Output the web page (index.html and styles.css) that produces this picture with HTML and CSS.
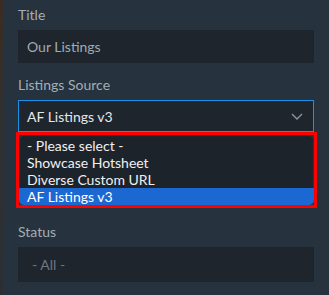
FILE: index.html
```html
<!DOCTYPE html>
<html lang="en">
<head>
    <meta charset="UTF-8">
    <title>Listings widget settings</title>
    <link rel="stylesheet" href="styles.css">
</head>
<body>
    <div class="edge"></div>
    <div class="panel">
        <div class="field">
            <label class="field-label">Title</label>
            <div class="input">Our Listings</div>
        </div>

        <div class="field field-open">
            <label class="field-label">Listings Source</label>
            <div class="select">
                <span>AF Listings v3</span>
                <svg class="chevron" width="12" height="7" viewBox="0 0 12 7">
                    <path d="M1 1 L6 6 L11 1" fill="none" stroke="#8b959d" stroke-width="1.4"/>
                </svg>
            </div>
            <!-- open native dropdown, outlined -->
            <div class="dropdown">
                <ul class="options">
                    <li>- Please select -</li>
                    <li>Showcase Hotsheet</li>
                    <li>Diverse Custom URL</li>
                    <li class="selected">AF Listings v3</li>
                </ul>
            </div>
        </div>

        <div class="field">
            <label class="field-label">Status</label>
            <div class="input input-status placeholder">- All -</div>
        </div>
    </div>
</body>
</html>
```

FILE: styles.css
```css
body {
    margin: 0;
    padding: 0;
    background-color: #26323d;
    font-family: Lato, "Noto Sans", sans-serif;
    display: flex;
    min-height: 295px;
}
.edge {
    width: 3px;
    background: linear-gradient(#3b2c22, #30302f 40%, #2b2f34);
}
.panel {
    flex: 1;
    padding: 6px 15px 0 15px;
}
.field {
    margin-bottom: 13px;
}
.field-open {
    position: relative;
    margin-bottom: 91px;
}
.field-label {
    display: block;
    font-size: 14px;
    line-height: 18px;
    color: #a4aeb6;
    margin-bottom: 6px;
}
.input {
    height: 33px;
    background-color: #1e252d;
    color: #a1abb3;
    font-size: 14px;
    line-height: 33px;
    padding: 0 9px;
}
.input-status {
    height: 35px;
    line-height: 35px;
    padding: 0 14px;
}
.placeholder {
    color: #6e7780;
}
.select {
    height: 30px;
    border: 1px solid #1c8fe6;
    background-color: #1e252d;
    color: #e4e8eb;
    font-size: 14px;
    padding: 0 9px 0 8px;
    display: flex;
    align-items: center;
    justify-content: space-between;
}
.chevron {
    margin-right: 1px;
}
.dropdown {
    position: absolute;
    left: -2px;
    right: -3px;
    top: 56px;
    border: 3px solid #ff0000;
}
.options {
    list-style: none;
    margin: 0;
    padding: 2px 0 0 0;
    background-color: #1d232a;
    border-radius: 5px;
    overflow: hidden;
    box-shadow: inset 0 0 2px rgba(120, 130, 140, 0.5);
}
.options li {
    font-size: 14px;
    line-height: 17px;
    color: #eef0f2;
    padding: 0 8px;
}
.options .selected {
    background-color: #1c68d3;
    color: #ffffff;
}
```
